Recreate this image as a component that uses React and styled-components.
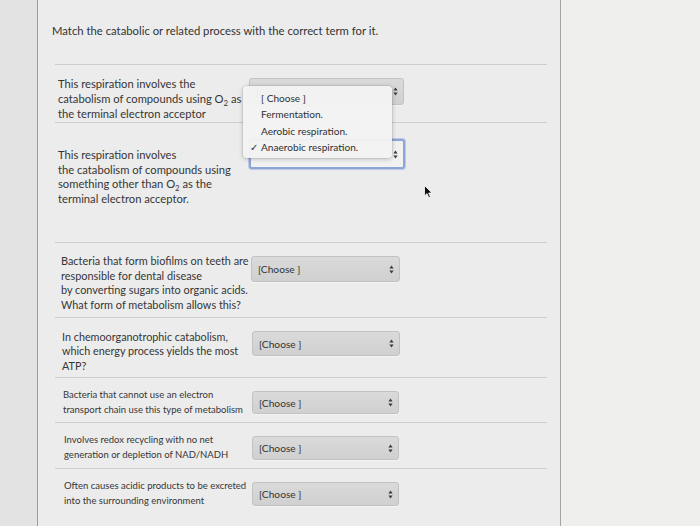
import React from "react";
import styled, { createGlobalStyle } from "styled-components";

const Global = createGlobalStyle`
    html, body {
        margin: 0;
        padding: 0;
        background: #ebebeb;
        font-family: Lato, "Open Sans", sans-serif;
        color: #3a3a3a;
    }
`

const Page = styled.div`
    display: flex;
    width: 700px;
    height: 526px;
    overflow: hidden;
    position: relative;
`
const Gutter = styled.div`
    width: 37px;
    background: #e3e3e3;
`
const Card = styled.div`
    width: 524px;
    background: #ececec;
    border-left: 1px solid #9c9c9c;
    border-right: 1px solid #a4a4a4;
    padding: 23px 0 0 0;
    box-sizing: border-box;
    position: relative;
`
const Aside = styled.div`
    flex: 1;
    background: #efefee;
`
const Title = styled.p`
    margin: 0 0 0 14px;
    font-size: 11.3px;
    line-height: 16px;
    color: #333;
`
const List = styled.div`
    margin: 25px 13px 0 17px;
`
const Row = styled.div`
    display: flex;
    align-items: flex-start;
    height: ${p => p.h}px;
    border-top: 1px solid #cdcdcd;
    box-sizing: border-box;
    position: relative;
`
const Prompt = styled.div`
    width: ${p => 194 - p.indent}px;
    padding-left: ${p => p.indent}px;
    margin-top: ${p => p.top}px;
    font-size: ${p => p.size}px;
    line-height: ${p => p.lh}px;
    white-space: nowrap;
    color: #363636;

    sub {
        font-size: 0.7em;
        line-height: 0;
    }
`
const Select = styled.div`
    display: flex;
    align-items: center;
    justify-content: space-between;
    box-sizing: border-box;
    margin-top: ${p => p.top}px;
    margin-left: ${p => p.left}px;
    width: ${p => p.w}px;
    height: ${p => p.h}px;
    padding: 0 5px 0 6px;
    border-radius: 3px;
    border: ${p => p.focused ? "2px solid #8ea6d4" : "1px solid #c2c2c2"};
    box-shadow: ${p => p.focused ? "0 0 0 1px #b9c9e6" : "0 1px 0 #f4f4f4"};
    background: ${p => p.focused
        ? "#f1f1f1"
        : "linear-gradient(#dadada, #d0d0d0)"};
    font-size: 10.2px;
    color: #333;
`
const Arrows = styled.svg`
    width: 5px;
    height: 9px;
    flex: none;
`
const Menu = styled.div`
    position: absolute;
    left: 188px;
    top: 21px;
    width: 149px;
    padding: 4px 0 3px;
    background: rgba(243, 243, 243, 0.97);
    border-radius: 4px;
    box-shadow: 0 1px 5px rgba(0, 0, 0, 0.22), 0 0 0 1px rgba(0, 0, 0, 0.06);
    z-index: 2;
`
const MenuItem = styled.div`
    display: flex;
    align-items: center;
    height: 16.3px;
    font-size: 10.1px;
    color: #2f2f2f;
`
const Check = styled.span`
    width: 18px;
    text-align: right;
    padding-right: 3px;
    box-sizing: border-box;
    font-size: 10px;
`
const Cursor = styled.svg`
    position: absolute;
    left: 424px;
    top: 185px;
    width: 9px;
    height: 14px;
`

const rows = [
    {
        h: 58, indent: 3, top: 11, size: 11.2, lh: 15,
        sel: { top: 13, left: 0, w: 155, h: 27 },
        text: <>This respiration involves the<br />catabolism of compounds using O<sub>2</sub> as<br />the terminal electron acceptor</>,
        menu: true,
    },
    {
        h: 120, indent: 3, top: 25, size: 11.2, lh: 14.7,
        sel: { top: 16, left: 0, w: 156, h: 30, focused: true, blank: true },
        text: <>This respiration involves<br />the catabolism of compounds using<br />something other than O<sub>2</sub> as the<br />terminal electron acceptor.</>,
    },
    {
        h: 75, indent: 6, top: 11, size: 10.9, lh: 14.5,
        sel: { top: 13, left: 2, w: 149, h: 26 },
        text: <>Bacteria that form biofilms on teeth are<br />responsible for dental disease<br />by converting sugars into organic acids.<br />What form of metabolism allows this?</>,
    },
    {
        h: 60, indent: 7, top: 12, size: 10.8, lh: 14.3,
        sel: { top: 13, left: 3, w: 148, h: 25 },
        text: <>In chemoorganotrophic catabolism,<br />which energy process yields the most<br />ATP?</>,
    },
    {
        h: 45, indent: 8, top: 10, size: 9.5, lh: 14.5,
        sel: { top: 13, left: 3, w: 147, h: 23 },
        text: <>Bacteria that cannot use an electron<br />transport chain use this type of metabolism</>,
    },
    {
        h: 46, indent: 9, top: 10, size: 9.5, lh: 14.5,
        sel: { top: 13, left: 3, w: 147, h: 24 },
        text: <>Involves redox recycling with no net<br />generation or depletion of NAD/NADH</>,
    },
    {
        h: 58, indent: 9, top: 10, size: 9.5, lh: 14.5,
        sel: { top: 13, left: 3, w: 147, h: 24 },
        text: <>Often causes acidic products to be excreted<br />into the surrounding environment</>,
    },
]

const options = ["[ Choose ]", "Fermentation.", "Aerobic respiration.", "Anaerobic respiration."]

const UpDown = () => (
    <Arrows viewBox="0 0 5 9">
        <path d="M2.5 0.5 L4.6 3.6 H0.4 Z" fill="#3a3a3a" />
        <path d="M2.5 8.5 L4.6 5.4 H0.4 Z" fill="#3a3a3a" />
    </Arrows>
)

export default function App() {
    return (
        <>
            <Global />
            <Page>
                <Gutter />
                <Card>
                    <Title>Match the catabolic or related process with the correct term for it.</Title>
                    <List>
                        {rows.map((r, i) => (
                            <Row key={i} h={r.h}>
                                <Prompt indent={r.indent} top={r.top} size={r.size} lh={r.lh}>{r.text}</Prompt>
                                <Select {...r.sel}>
                                    <span>{r.sel.blank ? "" : "[Choose ]"}</span>
                                    <UpDown />
                                </Select>
                                {r.menu && (
                                    <Menu>
                                        {options.map((o, j) => (
                                            <MenuItem key={o}>
                                                <Check>{j === 3 ? "✓" : ""}</Check>
                                                {o}
                                            </MenuItem>
                                        ))}
                                    </Menu>
                                )}
                            </Row>
                        ))}
                    </List>
                </Card>
                <Aside />
                <Cursor viewBox="0 0 9 14">
                    <path d="M0.5 0.5 L0.5 11 L3 8.6 L4.8 12.8 L6.4 12.1 L4.7 8 L8 8 Z" fill="#111" stroke="#fff" strokeWidth="0.8" />
                </Cursor>
            </Page>
        </>
    )
}
